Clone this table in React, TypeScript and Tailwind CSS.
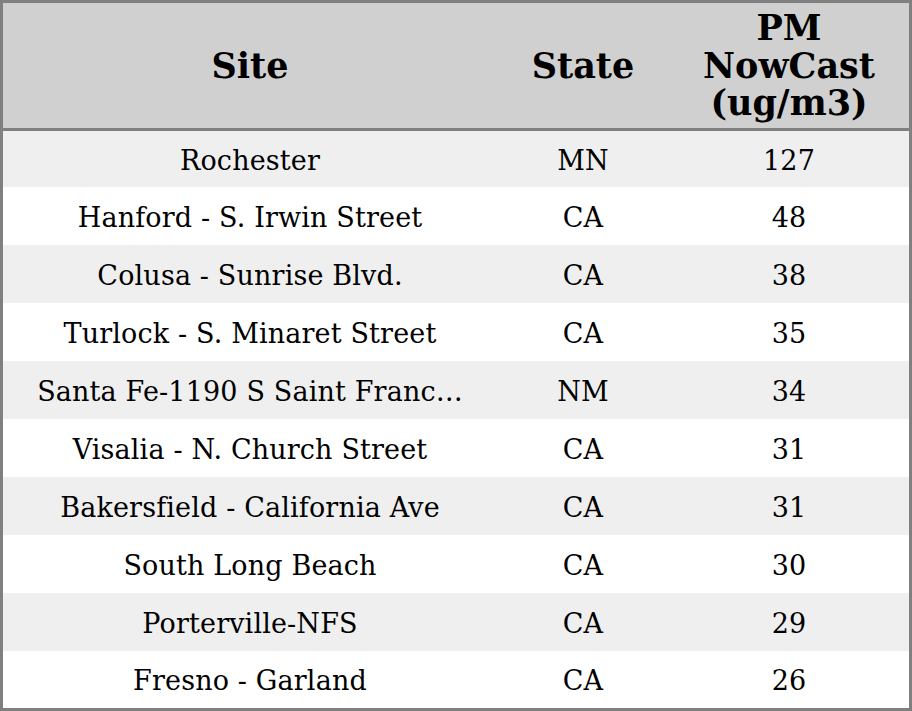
import React from 'react';

const rows = [
  ['Rochester', 'MN', '127'],
  ['Hanford - S. Irwin Street', 'CA', '48'],
  ['Colusa - Sunrise Blvd.', 'CA', '38'],
  ['Turlock - S. Minaret Street', 'CA', '35'],
  ['Santa Fe-1190 S Saint Franc…', 'NM', '34'],
  ['Visalia - N. Church Street', 'CA', '31'],
  ['Bakersfield - California Ave', 'CA', '31'],
  ['South Long Beach', 'CA', '30'],
  ['Porterville-NFS', 'CA', '29'],
  ['Fresno - Garland', 'CA', '26'],
];

export default function App() {
  return (
    <div className="w-[912px] h-[711px] border-[3px] border-[#808080] bg-white text-black font-['DejaVu_Serif',serif] overflow-hidden">
      <div className="grid grid-cols-[494px_172px_240px] h-[128px] bg-[#d0d0d0] border-b-[3px] border-[#808080] text-[35px] font-bold leading-[37.5px] text-center">
        <div className="flex items-center justify-center">Site</div>
        <div className="flex items-center justify-center">State</div>
        <div className="flex items-center justify-center">
          PM<br />NowCast<br />(ug/m3)
        </div>
      </div>
      {rows.map(([site, state, pm], i) => (
        <div
          key={i}
          className={`grid grid-cols-[494px_172px_240px] text-[27px] leading-none tracking-[0.15px] text-center ${i === 0 ? 'h-[56px]' : i === 9 ? 'h-[57px]' : 'h-[58px]'} ${i % 2 === 0 ? 'bg-[#efefef]' : 'bg-white'}`}
        >
          <div className="flex items-center justify-center whitespace-nowrap pt-0.5">{site}</div>
          <div className="flex items-center justify-center pt-0.5">{state}</div>
          <div className="flex items-center justify-center pt-0.5">{pm}</div>
        </div>
      ))}
    </div>
  );
}
